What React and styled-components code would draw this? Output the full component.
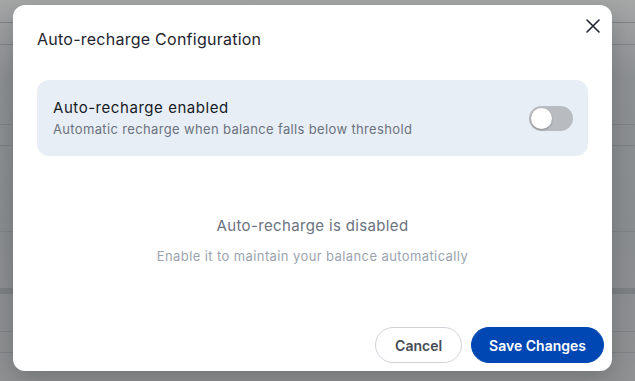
import React, { useState } from "react";
import styled, { createGlobalStyle } from "styled-components";

const GlobalStyle = createGlobalStyle`
  html, body {
    margin: 0;
    padding: 0;
    height: 100%;
  }
  body {
    font-family: Inter, "Noto Sans", "Liberation Sans", sans-serif;
  }
`;

const Backdrop = styled.div`
  width: 635px;
  height: 381px;
  box-sizing: border-box;
  padding: 5px 23px 10px 13px;
  display: flex;
  background:
    linear-gradient(#7f8386, #7f8386) 0 22px / 100% 1px no-repeat,
    linear-gradient(#7f8386, #7f8386) 0 44px / 100% 1px no-repeat,
    linear-gradient(#7f8386, #7f8386) 0 124px / 100% 1px no-repeat,
    linear-gradient(#7f8386, #7f8386) 0 145px / 100% 1px no-repeat,
    linear-gradient(#7f8386, #7f8386) 0 231px / 100% 1px no-repeat,
    linear-gradient(#7c8084, #7c8084) 0 288px / 100% 6px no-repeat,
    linear-gradient(#7f8386, #7f8386) 0 331px / 100% 1px no-repeat,
    linear-gradient(#7f8386, #7f8386) 0 352px / 100% 1px no-repeat,
    linear-gradient(180deg, #a5a7a7 0%, #8d9093 20%, #8a8d90 60%, #8f9192 100%);
`;

const Modal = styled.div`
  position: relative;
  flex: 1;
  background: #ffffff;
  border-radius: 12px;
  box-shadow: 0 8px 24px rgba(0, 0, 0, 0.2);
  display: flex;
  flex-direction: column;
  padding: 22px 8px 8px 24px;
  box-sizing: border-box;
`;

const Title = styled.h2`
  margin: 0;
  font-size: 16px;
  line-height: 24px;
  font-weight: 400;
  color: #1f2430;
  letter-spacing: 0.25px;
`;

const CloseButton = styled.button`
  position: absolute;
  top: 11px;
  right: 9px;
  width: 20px;
  height: 20px;
  padding: 0;
  border: none;
  background: transparent;
  display: flex;
  align-items: center;
  justify-content: center;
  color: #1f2430;
  cursor: pointer;
`;

const Body = styled.div`
  padding-right: 16px;
  margin-top: 29px;
`;

const SettingCard = styled.div`
  background: #e8eef5;
  border-radius: 12px;
  height: 76px;
  box-sizing: border-box;
  padding: 0 15px 0 16px;
  display: flex;
  align-items: center;
  justify-content: space-between;
`;

const SettingText = styled.div`
  display: flex;
  flex-direction: column;
  gap: 2px;
`;

const SettingLabel = styled.span`
  font-size: 15px;
  line-height: 20px;
  font-weight: 400;
  color: #161b26;
  letter-spacing: 0.55px;
`;

const SettingHint = styled.span`
  font-size: 13px;
  line-height: 18px;
  color: #6b7280;
  letter-spacing: 0.35px;
`;

const Switch = styled.button`
  width: 44px;
  height: 25px;
  border: none;
  border-radius: 999px;
  padding: 2px;
  background: ${(p) => (p.$on ? "#0047b3" : "#b8bbc0")};
  display: flex;
  justify-content: ${(p) => (p.$on ? "flex-end" : "flex-start")};
  cursor: pointer;
`;

const Knob = styled.span`
  width: 21px;
  height: 21px;
  border-radius: 50%;
  background: #ffffff;
  box-shadow: 0 1px 2px rgba(0, 0, 0, 0.25);
`;

const EmptyState = styled.div`
  display: flex;
  flex-direction: column;
  align-items: center;
  gap: 11px;
  margin-top: 60px;
`;

const EmptyTitle = styled.span`
  font-size: 15px;
  line-height: 20px;
  color: #6b7280;
  letter-spacing: 0.35px;
`;

const EmptyHint = styled.span`
  font-size: 13px;
  line-height: 18px;
  color: #9ca3af;
  letter-spacing: 0.4px;
`;

const Footer = styled.div`
  margin-top: auto;
  display: flex;
  justify-content: flex-end;
  gap: 9px;
`;

const Button = styled.button`
  height: 36px;
  border-radius: 999px;
  font-family: inherit;
  font-size: 14px;
  font-weight: 600;
  padding: 0 ${(p) => (p.$primary ? "17px" : "19px")};
  cursor: pointer;
  border: 1px solid ${(p) => (p.$primary ? "#0047b3" : "#cfd3d8")};
  background: ${(p) => (p.$primary ? "#0047b3" : "#ffffff")};
  color: ${(p) => (p.$primary ? "#ffffff" : "#464b54")};
`;

export default function App() {
  const [enabled, setEnabled] = useState(false);

  return (
    <>
      <GlobalStyle />
      <Backdrop>
        <Modal>
          <Title>Auto-recharge Configuration</Title>
          <CloseButton aria-label="Close">
            <svg width="16" height="16" viewBox="0 0 16 16" fill="none">
              <path d="M2 2L14 14M14 2L2 14" stroke="currentColor" strokeWidth="1.6" strokeLinecap="round" />
            </svg>
          </CloseButton>
          <Body>
            <SettingCard>
              <SettingText>
                <SettingLabel>Auto-recharge enabled</SettingLabel>
                <SettingHint>Automatic recharge when balance falls below threshold</SettingHint>
              </SettingText>
              <Switch $on={enabled} onClick={() => setEnabled(!enabled)}>
                <Knob />
              </Switch>
            </SettingCard>
            <EmptyState>
              <EmptyTitle>Auto-recharge is disabled</EmptyTitle>
              <EmptyHint>Enable it to maintain your balance automatically</EmptyHint>
            </EmptyState>
          </Body>
          <Footer>
            <Button>Cancel</Button>
            <Button $primary>Save Changes</Button>
          </Footer>
        </Modal>
      </Backdrop>
    </>
  );
}
